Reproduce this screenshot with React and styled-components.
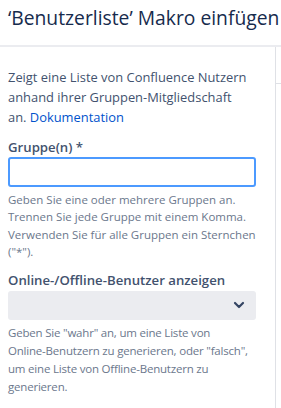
import React from 'react';
import styled, { createGlobalStyle } from 'styled-components';

const GlobalStyle = createGlobalStyle`
  body {
    margin: 0;
    font-family: "Open Sans", "Noto Sans", sans-serif;
    background: #fff;
    overflow: hidden;
  }
`;

const Page = styled.div`
  width: 281px;
  height: 408px;
  display: flex;
  flex-direction: column;
  overflow: hidden;
`;

const Header = styled.div`
  height: 45px;
  flex-shrink: 0;
  border-bottom: 2px solid #ebecf0;
  padding-left: 8px;
  display: flex;
  align-items: flex-start;
  white-space: nowrap;
`;

const Title = styled.h1`
  margin: 6px 0 0;
  font-size: 19.3px;
  font-weight: 400;
  color: #172b4d;
  line-height: 24px;
`;

const Body = styled.div`
  flex: 1;
  display: flex;
`;

const Content = styled.div`
  width: 248px;
  padding: 20px 19px 0 8px;
`;

const Rail = styled.div`
  flex: 1;
  border-left: 1px solid #dfe1e6;
`;

const RailTab = styled.div`
  height: 36px;
  border-bottom: 1px solid #dfe1e6;
`;

const Intro = styled.p`
  margin: 0;
  font-size: 12.9px;
  line-height: 20px;
  color: #42526e;
`;

const Link = styled.a`
  color: #0052cc;
  text-decoration: none;
`;

const Field = styled.div`
  margin-top: ${p => p.$top}px;
`;

const Label = styled.label`
  display: block;
  font-size: 13.2px;
  font-weight: 600;
  line-height: 18px;
  color: #42526e;
  margin-bottom: ${p => p.$gap}px;
`;

const Input = styled.input`
  box-sizing: border-box;
  width: 248px;
  height: 30px;
  border: 2px solid #4c9aff;
  border-radius: 3px;
  background: #fff;
  outline: none;
  display: block;
`;

const Select = styled.div`
  box-sizing: border-box;
  width: 248px;
  height: 29px;
  border-radius: 3px;
  background: #ebecf0;
  display: flex;
  align-items: center;
  justify-content: flex-end;
  padding-right: 10px;
`;

const Help = styled.p`
  margin: 4px 0 0;
  font-size: 11.5px;
  line-height: ${p => p.$lh}px;
  letter-spacing: ${p => p.$ls || 0}px;
  color: #6b778c;
`;

const Word = styled.span`
  white-space: nowrap;
`;

const Chevron = () => (
  <svg width="14" height="14" viewBox="0 0 14 14">
    <path d="M3 5l4 4 4-4" fill="none" stroke="#344563" strokeWidth="2.2" strokeLinecap="round" strokeLinejoin="round" />
  </svg>
);

export default function App() {
  return (
    <Page>
      <GlobalStyle />
      <Header>
        <Title>‘Benutzerliste’ Makro einfügen</Title>
      </Header>
      <Body>
        <Content>
          <Intro>
            Zeigt eine Liste von Confluence Nutzern anhand ihrer Gruppen-Mitgliedschaft
            <br />
            an. <Link href="#">Dokumentation</Link>
          </Intro>
          <Field $top={11}>
            <Label $gap={1}>Gruppe(n) *</Label>
            <Input />
            <Help $lh={17.4}>
              Geben Sie eine oder mehrere Gruppen an. Trennen Sie jede Gruppe mit einem Komma. Verwenden Sie für alle Gruppen ein Sternchen ("*").
            </Help>
          </Field>
          <Field $top={10}>
            <Label $gap={2}>Online-/Offline-Benutzer anzeigen</Label>
            <Select>
              <Chevron />
            </Select>
            <Help $lh={18} $ls={-0.2}>
              Geben Sie "wahr" an, um eine Liste von <Word>Online-Benutzern</Word> zu generieren, oder "falsch", um eine Liste von <Word>Offline-Benutzern</Word> zu generieren.
            </Help>
          </Field>
        </Content>
        <Rail>
          <RailTab />
        </Rail>
      </Body>
    </Page>
  );
}
